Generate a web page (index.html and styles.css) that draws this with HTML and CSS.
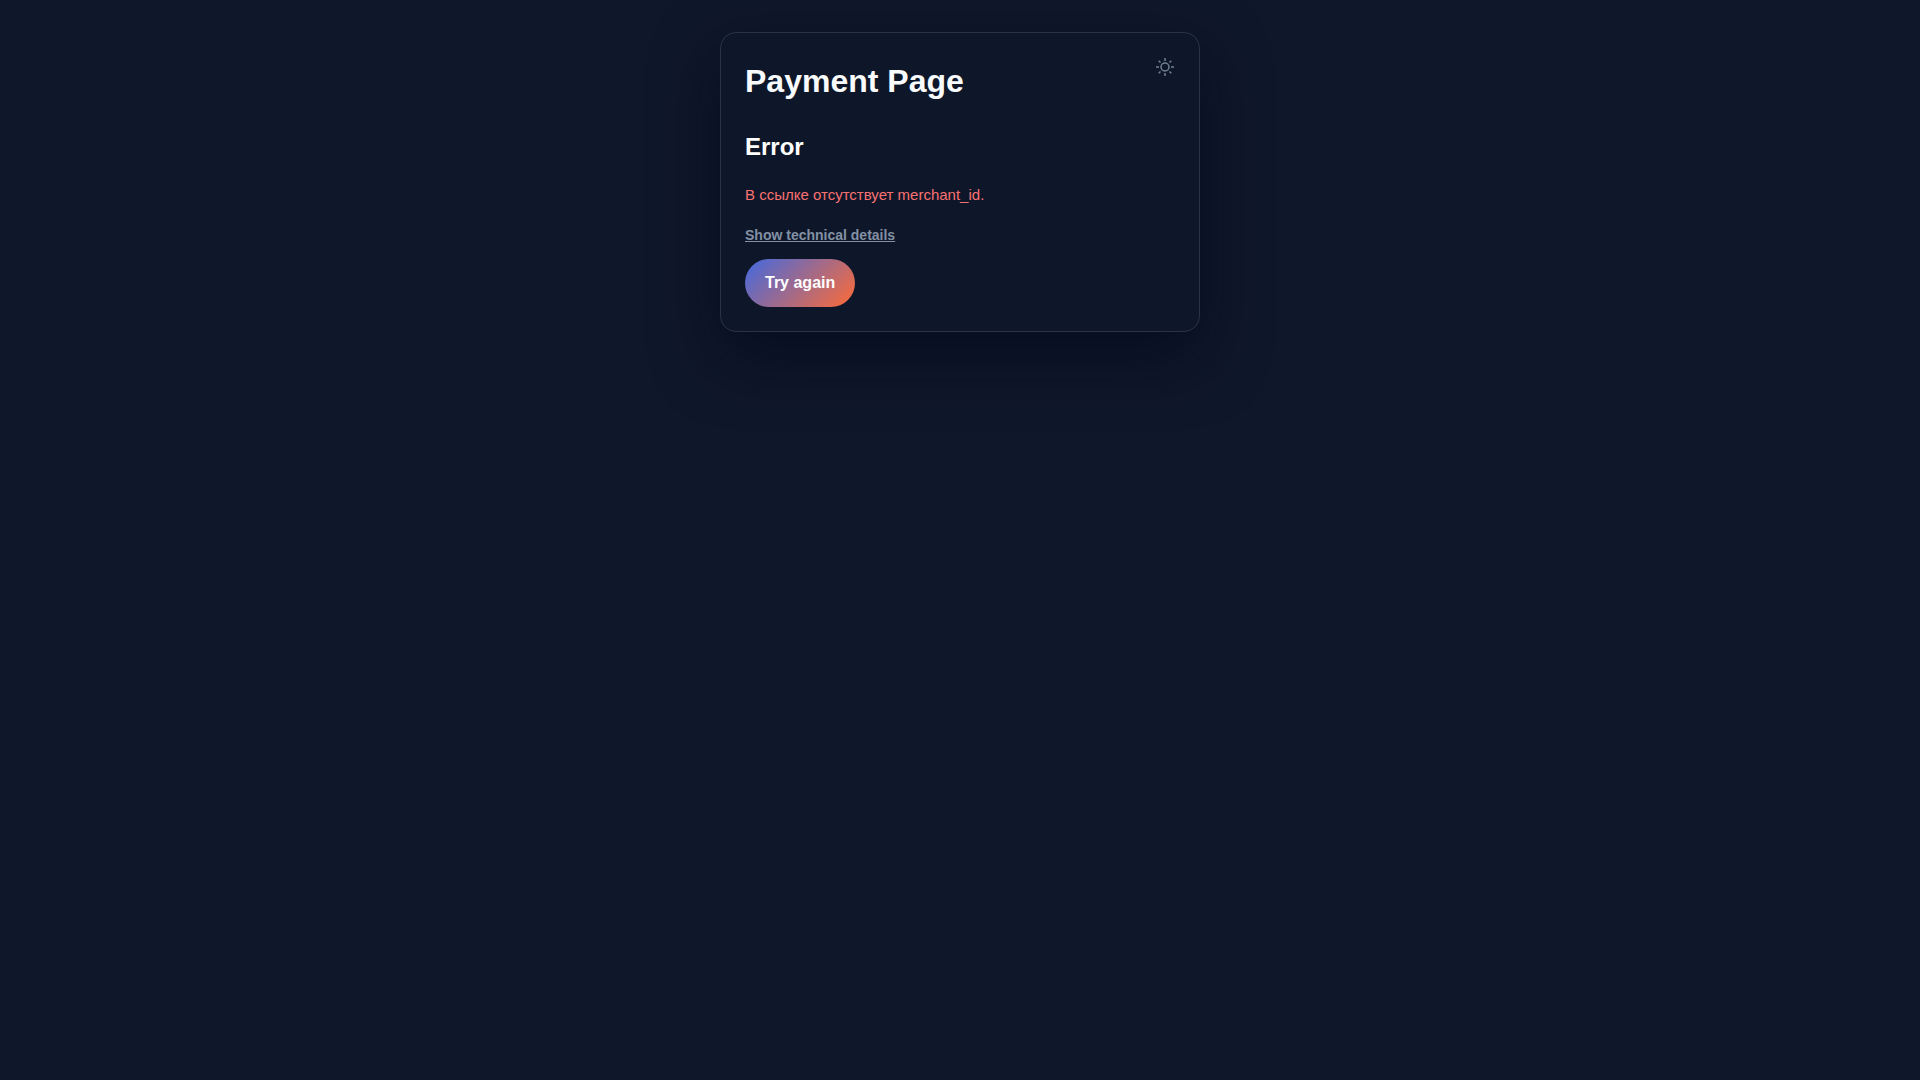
FILE: index.html
```html
<!DOCTYPE html>
<html lang="en">
<head>
    <meta charset="UTF-8">
    <meta name="viewport" content="width=device-width, initial-scale=1.0">
    <title>Payment Page</title>
    <link rel="stylesheet" href="styles.css">
</head>
<body>
    <main class="card">
        <button type="button" class="theme-toggle" aria-label="Toggle theme">
            <svg width="20" height="20" viewBox="0 0 20 20" fill="none" stroke="currentColor" stroke-width="1.5">
                <circle cx="10" cy="10" r="4"/>
                <path d="M10 1v3M10 16v3M1 10h3M16 10h3M3.7 3.7l1.8 1.8M14.5 14.5l1.8 1.8M3.7 16.3l1.8-1.8M14.5 5.5l1.8-1.8"/>
            </svg>
        </button>
        <h1>Payment Page</h1>
        <section class="error">
            <h2>Error</h2>
            <p class="error-text">В ссылке отсутствует merchant_id.</p>
            <button type="button" class="details-toggle">Show technical details</button>
            <button type="button" class="btn">Try again</button>
        </section>
    </main>
</body>
</html>
```
FILE: styles.css
```css
* {
    box-sizing: border-box;
}
body {
    min-height: 100vh;
    margin: 0;
    padding: 32px 16px;
    background: #0f172a;
    color: #f8fafc;
    font-family: "Liberation Sans", Arial, sans-serif;
    font-size: 16px;
}
.card {
    position: relative;
    max-width: 480px;
    margin: 0 auto;
    padding: 24px;
    border: 1px solid #2a3346;
    border-radius: 16px;
    background: #0e1729;
    box-shadow: 0 24px 64px rgba(2, 6, 28, 0.6);
}
h1 {
    margin: 4px 0 30px;
    font-size: 32px;
    line-height: 40px;
}
h2 {
    margin: 0 0 20px;
    font-size: 24px;
    line-height: 32px;
    color: #fff;
}
.error {
    display: flex;
    flex-direction: column;
    align-items: flex-start;
}
.error-text {
    margin: 0 0 20px;
    color: #f87171;
    font-size: 15px;
    line-height: 24px;
}
button {
    border: 0;
    font-family: inherit;
    cursor: pointer;
}
.details-toggle {
    margin-bottom: 16px;
    padding: 0;
    background: none;
    color: #8290a4;
    font-size: 14px;
    font-weight: 600;
    line-height: 16px;
    text-decoration: underline;
}
.btn {
    padding: 12px 20px;
    border-radius: 24px;
    background: linear-gradient(135deg, #4169e1, #ff6b35);
    color: #fff;
    font-size: 16px;
    font-weight: 600;
    line-height: 24px;
}
/* Sits over the top right corner of the card */
.theme-toggle {
    position: absolute;
    top: 24px;
    right: 24px;
    display: flex;
    padding: 0;
    background: none;
    color: #718096;
}
```
